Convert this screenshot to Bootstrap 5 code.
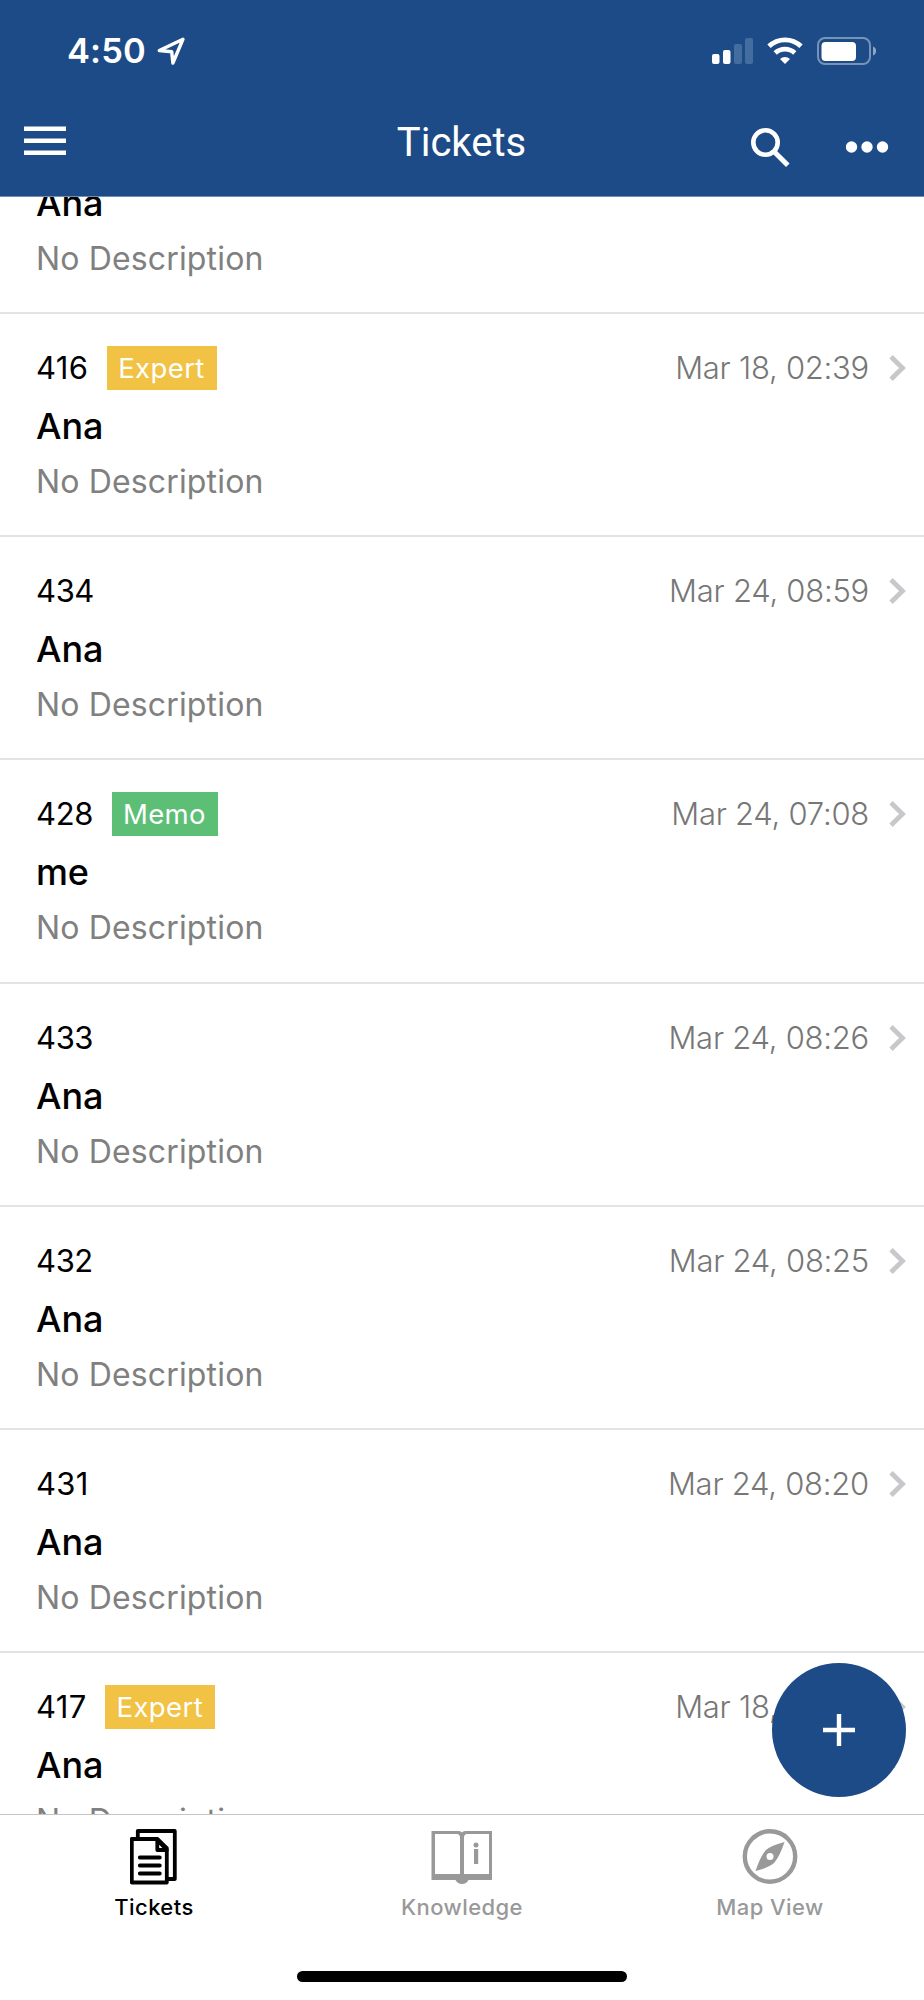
<!DOCTYPE html>
<html lang="en">
<head>
<meta charset="utf-8">
<meta name="viewport" content="width=device-width, initial-scale=1">
<title>Tickets</title>
<link rel="stylesheet" href="https://cdn.jsdelivr.net/npm/bootstrap@5.3.0/dist/css/bootstrap.min.css">
<style>
body{font-family:Inter,"Liberation Sans",sans-serif;color:#000;background:#fff}
svg{display:block;flex:none}
.screen{height:2000px;overflow:hidden}
.top{background:#1d4b87;color:#fff;height:196px;flex:none}
.status{height:100px;padding:2px 47px 0 67px}
.clock{font-size:34.5px;font-weight:600;line-height:44px;letter-spacing:.1px}
.arrow{margin-left:11px}
.bar{height:96px;display:grid;grid-template-columns:1fr auto 1fr;padding:0 24px}
.bar h1{font:400 40px/48px Roboto,sans-serif;margin:19px 0 0 -1px;letter-spacing:0}
.actions{margin-right:11px}
.scroll{height:1618px;flex:none;overflow:hidden;border-top:1px solid #6f8fb8}
.tickets{margin-top:-106.2px}
.ticket{height:223.2px;padding:32px 17px 0 36px;border-bottom:2px solid #e3e3e5}
.line{height:44px;line-height:44px}
.num{font-size:31px;letter-spacing:-.4px}
.num.narrow{letter-spacing:.3px}
.tag{font-size:27.5px;color:#fff;padding:0 12px 0 11px;margin-left:19px;letter-spacing:.4px}
.expert{background:#f2c244}.memo{background:#5dbe76}
.date{font-size:31px;font-weight:300;color:#777;letter-spacing:-.25px}
.chev{margin-left:20px}
.who{font-size:36px;font-weight:500;line-height:44px;margin-top:14px;letter-spacing:-.1px}
.desc{font-size:32px;color:#808080;line-height:44px;margin-top:12px;letter-spacing:.15px}
.tabs{flex:1;border-top:1px solid #c4c4c6;background:#fff;position:relative}
.tab{height:120px;padding-top:11px;color:#999;font-size:22px;font-weight:500;letter-spacing:.42px;line-height:28px}
.tab span{margin-top:7px}
.tab.active{color:#000}
.fab{position:absolute;right:18px;bottom:203px;width:134px;height:134px;border-radius:50%;background:#1d4b87;z-index:2}
.home{width:330px;height:11px;border-radius:6px;background:#000;margin-top:36px}
</style>
</head>
<body>
<div class="screen d-flex flex-column">
<header class="top">
  <div class="status d-flex align-items-center">
    <span class="clock">4:50</span>
    <svg class="arrow" width="30" height="30" viewBox="0 0 30 30" fill="none" stroke="#fff" stroke-width="3.4" stroke-linejoin="round"><path d="M26 3.2 2.3 14.5l12.4 1.2L15.9 27Z"/></svg>
    <div class="ms-auto d-flex align-items-center">
      <svg width="42" height="28" viewBox="0 0 42 28" fill="#fff"><rect y="17" width="7.5" height="10" rx="2"/><rect x="11" y="13" width="7.5" height="14" rx="2"/><g fill="#446d9f"><rect x="22" y="7" width="8" height="20" rx="2"/><rect x="33" y="1" width="8" height="26" rx="2"/></g></svg>
      <svg style="margin-left:13px" width="36" height="28" viewBox="0 0 36 28" fill="none" stroke="#fff" stroke-width="4.8"><path d="M2 9.3a23 23 0 0 1 32 0M8.2 16a14.2 14.2 0 0 1 19.6 0"/><path d="M13 22a7.5 7.5 0 0 1 10 0l-5 5Z" fill="#fff" stroke="none"/></svg>
      <svg style="margin-left:14px" width="60" height="28" viewBox="0 0 60 28"><rect x="1" y="1" width="52" height="26" rx="7" fill="none" stroke="#fff" stroke-opacity=".4" stroke-width="2"/><rect x="4.5" y="5" width="34.5" height="19" rx="4" fill="#fff"/><path d="M56 9.5a4.8 4.8 0 0 1 0 9Z" fill="#fff" opacity=".5"/></svg>
    </div>
  </div>
  <nav class="bar">
    <svg width="42" height="30" viewBox="0 0 42 30" fill="#fff" style="margin-top:26px"><path d="M0 .5h42V5H0zM0 12.5h42V17H0zM0 24.5h42V29H0z"/></svg>
    <h1>Tickets</h1>
    <div class="actions d-flex justify-content-end">
      <svg width="42" height="42" viewBox="0 0 42 42" fill="none" stroke="#fff" style="margin-top:27px"><circle cx="15.5" cy="15.5" r="12.2" stroke-width="4.6"/><path d="m25 25.5 12.8 12.8" stroke-width="5"/></svg>
      <svg width="43" height="12" viewBox="0 0 43 12" fill="#fff" style="margin:41px 0 0 54px"><circle cx="5.500" cy="6" r="5.700"/><circle cx="21" cy="6" r="5.700"/><circle cx="36.500" cy="6" r="5.700"/></svg>
    </div>
  </nav>
</header>
<svg class="d-none"><symbol id="chev" viewBox="0 0 18 28"><path d="m2 2.7 11.5 11.3L2 25.3" fill="none" stroke="#c7c7cc" stroke-width="4.8"/></symbol></svg>
<main class="scroll">
<div class="tickets">
  <article class="ticket"><div class="line"></div><div class="who">Ana</div><div class="desc">No Description</div></article>
  <article class="ticket"><div class="line d-flex align-items-center"><span class="num narrow">416</span><span class="tag expert">Expert</span><span class="date ms-auto">Mar 18, 02:39</span><svg class="chev" width="18" height="28"><use href="#chev"/></svg></div><div class="who">Ana</div><div class="desc">No Description</div></article>
  <article class="ticket"><div class="line d-flex align-items-center"><span class="num">434</span><span class="date ms-auto">Mar 24, 08:59</span><svg class="chev" width="18" height="28"><use href="#chev"/></svg></div><div class="who">Ana</div><div class="desc">No Description</div></article>
  <article class="ticket"><div class="line d-flex align-items-center"><span class="num">428</span><span class="tag memo">Memo</span><span class="date ms-auto">Mar 24, 07:08</span><svg class="chev" width="18" height="28"><use href="#chev"/></svg></div><div class="who">me</div><div class="desc">No Description</div></article>
  <article class="ticket"><div class="line d-flex align-items-center"><span class="num">433</span><span class="date ms-auto">Mar 24, 08:26</span><svg class="chev" width="18" height="28"><use href="#chev"/></svg></div><div class="who">Ana</div><div class="desc">No Description</div></article>
  <article class="ticket"><div class="line d-flex align-items-center"><span class="num">432</span><span class="date ms-auto">Mar 24, 08:25</span><svg class="chev" width="18" height="28"><use href="#chev"/></svg></div><div class="who">Ana</div><div class="desc">No Description</div></article>
  <article class="ticket"><div class="line d-flex align-items-center"><span class="num narrow">431</span><span class="date ms-auto">Mar 24, 08:20</span><svg class="chev" width="18" height="28"><use href="#chev"/></svg></div><div class="who">Ana</div><div class="desc">No Description</div></article>
  <article class="ticket"><div class="line d-flex align-items-center"><span class="num narrow">417</span><span class="tag expert">Expert</span><span class="date ms-auto">Mar 18, 02:39</span><svg class="chev" width="18" height="28"><use href="#chev"/></svg></div><div class="who">Ana</div><div class="desc">No Description</div></article>
</div>
</main>
<footer class="tabs d-flex flex-column">
  <button class="fab border-0 p-0" aria-label="Add ticket"><svg class="mx-auto" width="32" height="32" viewBox="0 0 32 32" fill="#fff"><path d="M13.8 0h4.4v13.8H32v4.4H18.2V32h-4.4V18.2H0v-4.4h13.8z"/></svg></button>
  <div class="row g-0">
    <div class="tab active col-4 d-flex flex-column align-items-center">
      <svg width="48" height="60" viewBox="0.7 0 48 60" fill="none" stroke="currentColor" stroke-width="3.8" stroke-linejoin="round" stroke-linecap="round"><path d="M8.5 11V5h37v48H38"/><path d="M2.5 13h25.800L37.500 22v34.500h-35z"/><path d="M28 14v10h9.500z"/><path d="M10.500 31.500h20M10.500 39.500h20M10.500 47.500h20"/></svg>
      <span>Tickets</span>
    </div>
    <div class="tab col-4 d-flex flex-column align-items-center">
      <svg width="62" height="60" viewBox="0 0 62 60" fill="currentColor"><path fill-rule="evenodd" d="M.5 5H28q2 0 3 1.500Q32 5 34 5h27v49H37.500q-2 4-6.500 4t-6.500-4H.5zM4 8v40h25V11q-.500-3-3-3zM33 48h25V8H36q-2.500 0-3 3z"/><circle cx="45" cy="19" r="2.500"/><path d="M43 23h4.200v15H43z"/></svg>
      <span>Knowledge</span>
    </div>
    <div class="tab col-4 d-flex flex-column align-items-center">
      <svg width="56" height="60" viewBox="0 0 56 60"><circle cx="28" cy="30.5" r="25.2" fill="none" stroke="currentColor" stroke-width="4.4"/><path fill="currentColor" fill-rule="evenodd" d="M42.500 16Q37.500 31 32 37 26 42 13.500 45 18.500 30 24 24 30 19 42.500 16zM28 27a3.500 3.500 0 1 0 0 7 3.500 3.500 0 0 0 0-7z"/></svg>
      <span>Map View</span>
    </div>
  </div>
  <div class="home mx-auto"></div>
</footer>
</div>
<script src="https://cdn.jsdelivr.net/npm/bootstrap@5.3.0/dist/js/bootstrap.bundle.min.js"></script>
</body>
</html>
